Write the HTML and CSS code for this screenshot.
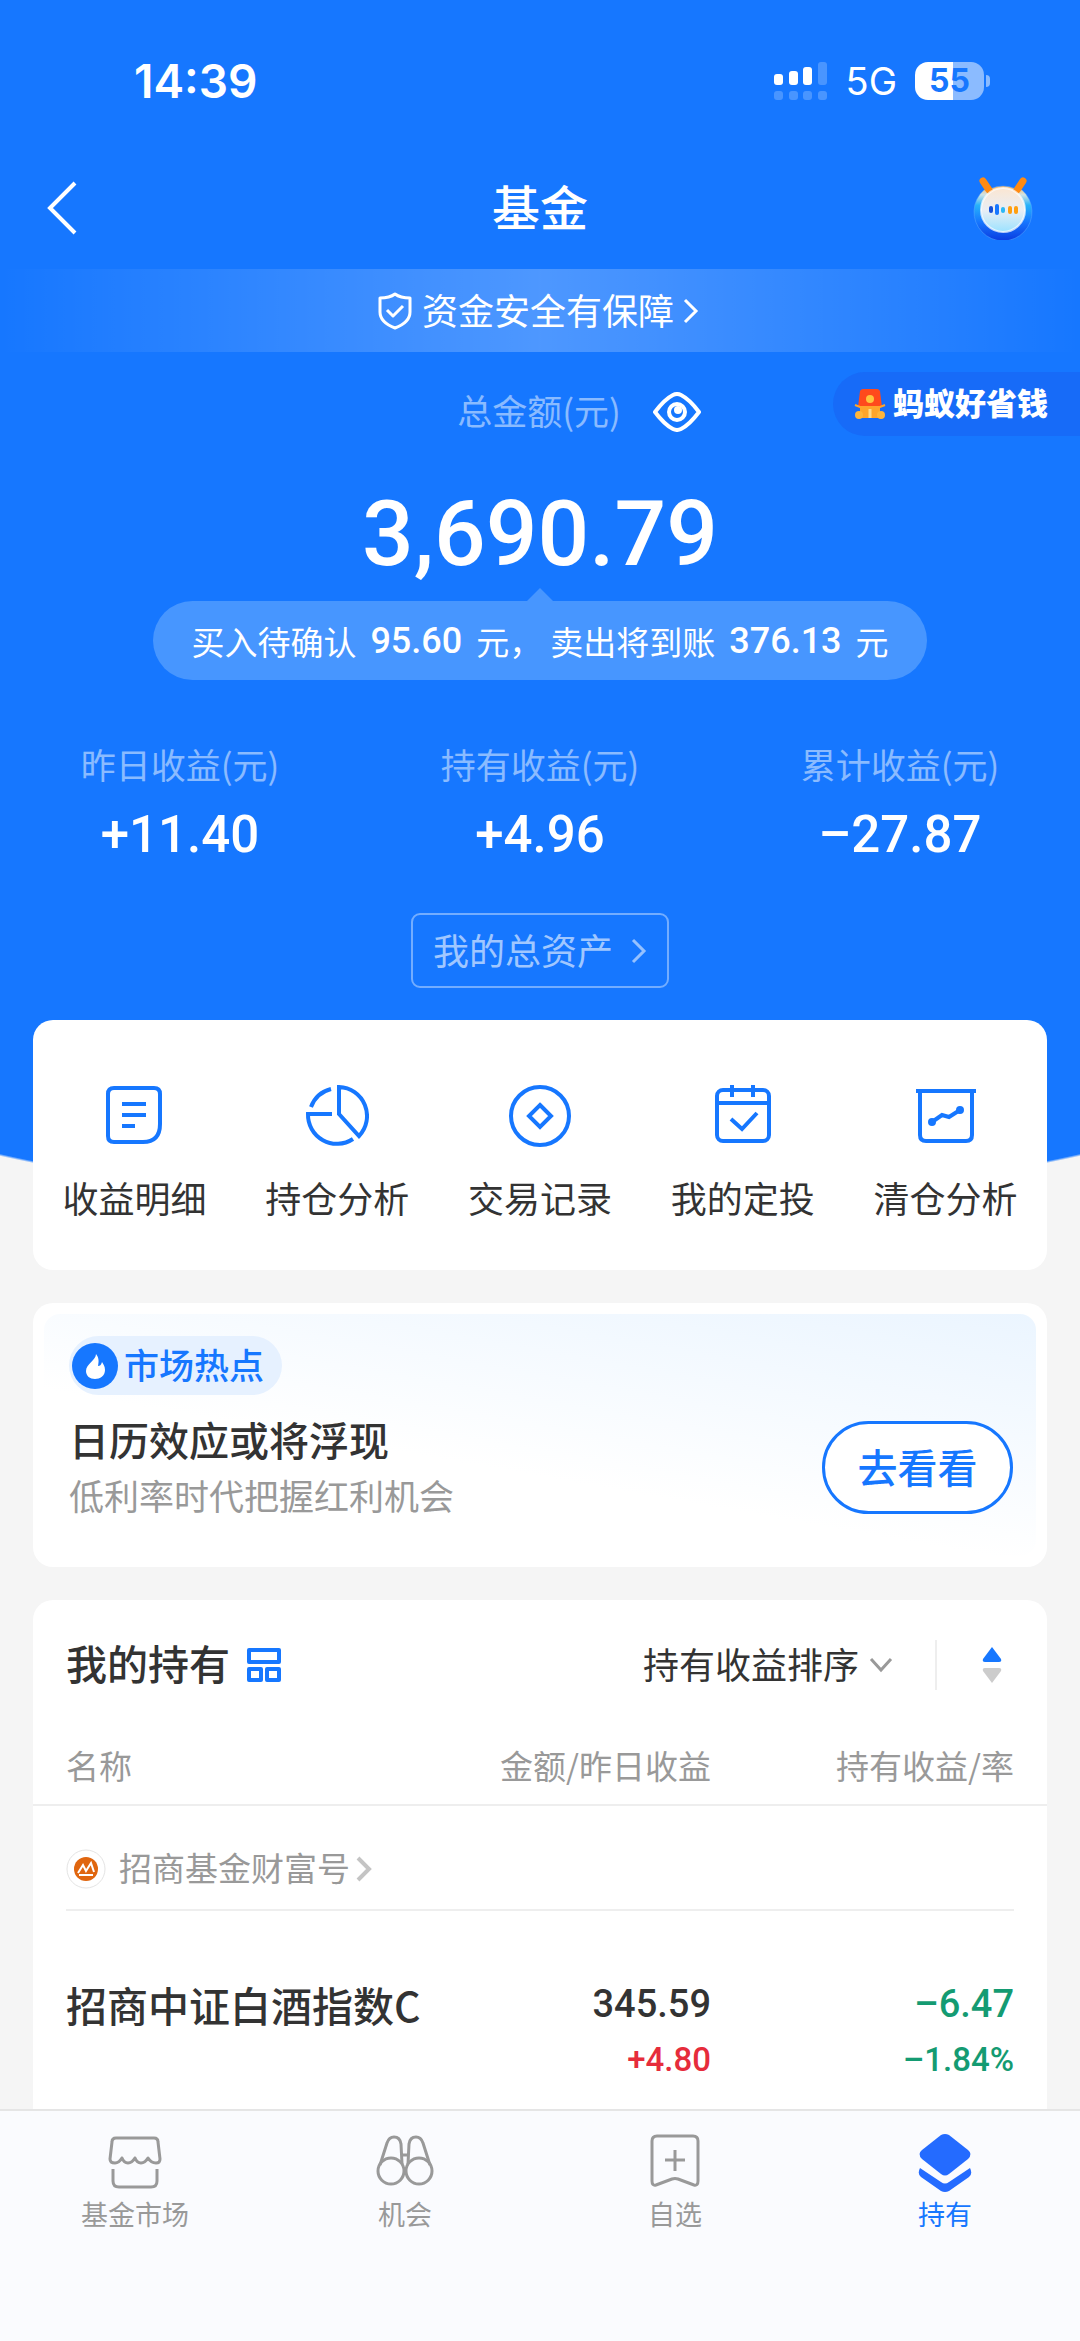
FILE: index.html
```html
<!DOCTYPE html>
<html lang="zh-CN">
<head>
<meta charset="utf-8">
<meta name="viewport" content="width=device-width, initial-scale=1">
<title>基金</title>
<link rel="stylesheet" href="styles.css">
</head>
<body>
<div class="page">
  <header class="hero">
    <div class="status">
      <span class="clock">14:39</span>
      <div class="status-right">
        <svg class="signal" width="54" height="38" viewBox="0 0 54 38" fill="#fff">
          <rect x="0" y="12" width="9" height="11" rx="3"/><rect x="15" y="9" width="9" height="14" rx="3"/><rect x="29" y="5" width="9" height="18" rx="3"/>
          <g opacity=".22"><rect x="44" y="0" width="9" height="23" rx="3"/><rect x="0" y="29" width="9" height="9" rx="3"/><rect x="15" y="29" width="9" height="9" rx="3"/><rect x="29" y="29" width="9" height="9" rx="3"/><rect x="44" y="29" width="9" height="9" rx="3"/></g>
        </svg>
        <span class="network">5G</span>
        <div class="battery"><span class="battery-level">55</span></div>
      </div>
    </div>

    <nav class="topbar">
      <button class="icon-button" aria-label="返回">
        <svg width="32" height="54" viewBox="0 0 32 54" fill="none" stroke="#fff" stroke-width="4"><path d="M29 2 4 27l25 25"/></svg>
      </button>
      <h1 class="title">基金</h1>
      <button class="icon-button" aria-label="智能助理">
        <svg width="62" height="64" viewBox="0 0 62 64">
          <defs>
            <linearGradient id="ring" x1="0" y1="0" x2="0" y2="1"><stop offset="0" stop-color="#ffb35a"/><stop offset=".16" stop-color="#cfe3e6"/><stop offset=".35" stop-color="#27b2fa"/><stop offset=".65" stop-color="#1677ff"/><stop offset="1" stop-color="#0a3be0"/></linearGradient>
            <linearGradient id="face" x1="0" y1="0" x2="0" y2="1"><stop offset="0" stop-color="#fbe6d2"/><stop offset=".5" stop-color="#e9eef4"/><stop offset="1" stop-color="#9be2ff"/></linearGradient>
          </defs>
          <path d="M12 14a29 29 0 1 0 38 0l-6-1q-13-6-26 0z" fill="url(#ring)" stroke="#5aa8ff" stroke-opacity=".5"/>
          <g fill="none" stroke="#ff8a12" stroke-width="7" stroke-linecap="round"><path d="M11 5l6 9"/><path d="M51 5l-6 9"/></g>
          <circle cx="31" cy="34" r="22" fill="url(#face)" stroke="#fff" stroke-opacity=".7" stroke-width="2"/>
          <g stroke-width="4" stroke-linecap="round"><path d="M19 32v3" stroke="#1550d8"/><path d="M25 30v7" stroke="#1677ff"/><path d="M31 33v2" stroke="#2bb8f5"/><path d="M38 32v4M44 32v4" stroke="#ff9f0f"/></g>
        </svg>
      </button>
    </nav>

    <a class="security" href="#">
      <svg width="36" height="38" viewBox="0 0 36 38" fill="none" stroke="#fff" stroke-width="3" stroke-linejoin="round"><path d="M18 2c4 3 9 4 15 4v14c0 8-7 13-15 16C10 33 3 28 3 20V6c6 0 11-1 15-4z"/><path d="M10 18l6 6 10-10"/></svg>
      <span>资金安全有保障</span>
      <svg width="16" height="26" viewBox="0 0 16 26" fill="none" stroke="#fff" stroke-width="3"><path d="M2 2l11 11L2 24"/></svg>
    </a>

    <section class="total">
      <div class="total-head">
        <span>总金额(元)</span>
        <button class="icon-button" aria-label="隐藏金额">
          <svg width="48" height="40" viewBox="0 0 48 40" fill="none" stroke="#fff"><path d="M2 20C8 12 14 6 20 3q4-2 8 0c6 3 12 9 18 17-6 8-12 14-18 17q-4 2-8 0C14 34 8 28 2 20z" stroke-width="4" stroke-linejoin="round"/><circle cx="24" cy="20" r="8" stroke-width="4"/><circle cx="25" cy="18" r="4" fill="#fff" stroke="none"/></svg>
        </button>
      </div>
      <a class="saving" href="#">
        <svg width="34" height="32" viewBox="0 0 34 32"><path d="M7 3q1-2 3-2h14q2 0 3 2l2 16H5z" fill="#ff4a1c"/><circle cx="17" cy="11" r="4" fill="#ffc53d"/><path d="M2 17l5 2h20l5-2" fill="none" stroke="#ffa52b" stroke-width="2"/><path d="M7 19h20v11H7z" fill="#ffa52b"/><circle cx="6" cy="27" r="4" fill="#ffb53c"/><circle cx="28" cy="27" r="4" fill="#ffb53c"/><path d="M17 21v9" stroke="#ffd98a" stroke-width="3"/></svg>
        <span>蚂蚁好省钱</span>
      </a>
      <p class="amount">3,690.79</p>
      <p class="pending"><span>买入待确认</span><b>95.60</b><span class="pending-buy">元，</span><span>卖出将到账</span><b>376.13</b><span>元</span></p>
    </section>

    <dl class="stats">
      <div><dt>昨日收益(元)</dt><dd>+11.40</dd></div>
      <div><dt>持有收益(元)</dt><dd>+4.96</dd></div>
      <div><dt>累计收益(元)</dt><dd>–27.87</dd></div>
    </dl>

    <button class="assets"><span>我的总资产</span>
      <svg width="16" height="26" viewBox="0 0 16 26" fill="none" stroke="#fff" stroke-opacity=".55" stroke-width="3"><path d="M2 2l11 11L2 24"/></svg>
    </button>
  </header>

  <main class="content">
    <nav class="card shortcuts">
      <a href="#"><svg class="glyph" viewBox="0 0 64 64"><path d="M12 4h40q6 0 6 6v30q0 18-17 18H12q-6 0-6-6V10q0-6 6-6z"/><path d="M20 20h24M20 31h24M20 42h13"/></svg><span>收益明细</span></a>
      <a href="#"><svg class="glyph" viewBox="0 0 64 64"><path d="M6 23A29 29 0 0 1 26 5"/><path d="M27 30H3a29 29 0 0 0 45 25"/><path d="M34 3v27l20 22A29 29 0 0 0 34 3z"/></svg><span>持仓分析</span></a>
      <a href="#"><svg class="glyph" viewBox="0 0 64 64"><circle cx="32" cy="32" r="29"/><path d="M32 21l11 11-11 11-11-11z"/></svg><span>交易记录</span></a>
      <a href="#"><svg class="glyph" viewBox="0 0 64 64"><rect x="6" y="6" width="52" height="51" rx="6"/><path d="M6 19h52M21 1v12M42 1v12M20 35l11 10 15-16"/></svg><span>我的定投</span></a>
      <a href="#"><svg class="glyph" viewBox="0 0 64 64"><path d="M2 7h60M6 8v43q0 6 6 6h40q6 0 6-6V8"/><path d="M18 38l10-7 7 2 11-7"/><circle cx="18" cy="38" r="2"/><circle cx="46" cy="26" r="2"/></svg><span>清仓分析</span></a>
    </nav>

    <section class="card hot">
      <div class="hot-inner">
        <div class="hot-text">
          <span class="tag"><svg width="46" height="46" viewBox="0 0 46 46"><circle cx="23" cy="23" r="23" fill="#1677ff"/><path d="M24 11c0 6-10 10-10 17 0 5 4 8 9 8s10-3 10-9c0-4-2-6-3-8-1 3-2 4-4 4 1-5 1-8-2-12z" fill="#fff"/></svg><span>市场热点</span></span>
          <h2>日历效应或将浮现</h2>
          <p>低利率时代把握红利机会</p>
        </div>
        <button class="go">去看看</button>
      </div>
    </section>

    <section class="card holdings">
      <div class="holdings-head">
        <h2>我的持有</h2>
        <button class="icon-button" aria-label="切换视图"><svg width="36" height="36" viewBox="0 0 36 36" fill="none" stroke="#1677ff" stroke-width="4" stroke-linejoin="round"><rect x="3" y="3" width="30" height="12"/><rect x="3" y="22" width="12" height="11"/><rect x="21" y="22" width="12" height="11"/></svg></button>
        <button class="sort"><span>持有收益排序</span><svg width="24" height="16" viewBox="0 0 24 16" fill="none" stroke="#999" stroke-width="3"><path d="M2 2l10 11L22 2"/></svg></button>
        <button class="order" aria-label="排序方向"><svg width="22" height="36" viewBox="0 0 22 36"><path d="M11 0l9 12q1 3-2 3H4q-3 0-2-3z" fill="#1677ff"/><path d="M11 36l9-12q1-3-2-3H4q-3 0-2 3z" fill="#ccc"/></svg></button>
      </div>
      <table class="funds">
        <thead><tr><th>名称</th><th>金额/昨日收益</th><th>持有收益/率</th></tr></thead>
        <tbody>
          <tr><td colspan="3"><a class="provider" href="#">
            <svg width="40" height="40" viewBox="0 0 40 40"><circle cx="20" cy="20" r="19" fill="#fff" stroke="#e4e4e4" stroke-width="1"/><circle cx="20" cy="20" r="12" fill="#e0660f"/><path d="M12 24l5-8 3 6 5-8 3 9M13 26h14" fill="none" stroke="#fff" stroke-width="2"/></svg>
            <span>招商基金财富号</span>
            <svg width="18" height="26" viewBox="0 0 18 26" fill="none" stroke="#c4c4c4" stroke-width="4"><path d="M3 2l11 11L3 24"/></svg>
          </a></td></tr>
          <tr class="fund">
            <td class="fund-name">招商中证白酒指数C</td>
            <td><span class="main-value">345.59</span><span class="sub-value up">+4.80</span></td>
            <td class="down"><span class="main-value">–6.47</span><span class="sub-value">–1.84%</span></td>
          </tr>
        </tbody>
      </table>
    </section>
  </main>

  <nav class="tabs">
    <a href="#"><svg viewBox="0 0 60 60"><path d="M11 6h38q4 0 4 4l2 17q0 4-4 4-5 0-8-5-3 5-7 5t-6-5q-3 5-7 5t-6-5q-3 5-7 5-5 0-5-4l2-17q0-4 4-4z"/><path d="M8 37v12q0 6 6 6h32q6 0 6-6V37"/></svg><span>基金市场</span></a>
    <a href="#"><svg viewBox="0 0 60 60"><circle cx="16" cy="39" r="13"/><circle cx="44" cy="39" r="13"/><path d="M5 33l7-22q2-6 7-6 6 0 7 7l1 20M55 33l-7-22q-2-6-7-6-6 0-7 7l-1 20M27 23h6"/></svg><span>机会</span></a>
    <a href="#"><svg viewBox="0 0 60 60"><path d="M12 4h36q5 0 5 5v40q0 5-4 4L33 47q-3-1-6 0L11 53q-4 1-4-4V9q0-5 5-5z"/><path d="M30 18v21M20 28h20"/></svg><span>自选</span></a>
    <a href="#" class="active" aria-current="page"><svg viewBox="0 0 60 60"><path d="M26 3q4-2 8 0l19 15q5 4 0 9L34 42q-4 3-8 0L7 27q-5-5 0-9z"/><path d="M5 36l21 14q4 3 8 0l21-14q3 6-1 9L34 59q-4 2-8 0L6 45q-4-3-1-9z"/></svg><span>持有</span></a>
  </nav>
</div>
</body>
</html>
```

FILE: styles.css
```css
* { box-sizing: border-box; margin: 0; padding: 0; }
body { font-family: "Noto Sans CJK SC", sans-serif; font-size: 36px; line-height: 48px; color: #333; background: #f5f5f5; }
button { font: inherit; color: inherit; background: none; border: 0; cursor: pointer; }
a { color: inherit; text-decoration: none; }
svg { display: block; flex: none; }
.page { min-height: 100vh; display: flex; flex-direction: column; }
.icon-button { display: flex; align-items: center; }

/* header */
.hero { display: flex; flex-direction: column; color: #fff; background: #1677ff; padding-bottom: 32px; }
.status { display: flex; justify-content: space-between; align-items: center; height: 162px; padding: 0 90px 0 134px; font-family: Inter, sans-serif; }
.clock { font-size: 46px; font-weight: 600; }
.status-right { display: flex; align-items: center; gap: 18px; }
.network { font-size: 38px; }
.battery { position: relative; width: 69px; height: 38px; border-radius: 13px; background: linear-gradient(90deg, #fff 55%, #8bbbff 55%); display: flex; align-items: center; justify-content: center; margin-right: 6px; }
.battery::after { content: ""; position: absolute; right: -6px; top: 13px; width: 4px; height: 12px; border-radius: 0 4px 4px 0; background: #8bbbff; }
.battery-level { font-size: 32px; font-weight: 700; color: #1677ff; }
.topbar { display: flex; justify-content: space-between; align-items: center; height: 92px; padding: 0 46px; }
.title { padding-bottom: 6px; font-size: 48px; font-weight: 500; }
.topbar .icon-button { flex: 1; }
.topbar .icon-button:last-child { justify-content: flex-end; }
.security { display: flex; align-items: center; justify-content: center; gap: 9px; height: 83px; margin-top: 15px; padding-right: 4px; background: linear-gradient(90deg, rgba(255,255,255,0), rgba(255,255,255,.24) 50%, rgba(255,255,255,0)); }
.security span, .assets span, .sort span, .tag span { padding-bottom: 4px; }
.total { position: relative; display: flex; flex-direction: column; align-items: center; padding-top: 32px; }
.total-head { display: flex; align-items: center; gap: 32px; height: 56px; padding-left: 78px; }
.total-head span { padding-bottom: 4px; color: rgba(255,255,255,.5); font-size: 35px; }
.saving { position: absolute; right: 0; top: 20px; display: flex; align-items: center; gap: 6px; height: 64px; padding: 0 32px 0 20px; border-radius: 32px 0 0 32px; background: #176bf8; font-size: 31px; font-weight: 900; }
.saving span { padding-bottom: 4px; }
.amount { margin-top: 42px; font: 500 91px/104px Roboto, sans-serif; }
.pending { position: relative; display: flex; align-items: center; height: 79px; margin-top: 15px; padding: 0 38px; border-radius: 40px; background: #4796ff; font-size: 33px; }
.pending::before { content: ""; position: absolute; left: 50%; bottom: 100%; margin-left: -13px; border: solid transparent; border-width: 0 13px 13px; border-bottom-color: #4796ff; }
.pending b { font: 500 36px/48px Roboto, sans-serif; margin: 0 14px; }
.pending-buy { margin-right: 8px; }
.stats { display: grid; grid-template-columns: repeat(3, 1fr); margin-top: 60px; text-align: center; }
.stats dt { color: rgba(255,255,255,.5); font-size: 35px; }
.stats dd { margin-top: 15px; font: 500 51px/64px Roboto, sans-serif; }
.assets { align-self: center; display: flex; align-items: center; gap: 18px; height: 75px; margin-top: 46px; padding: 0 20px; border: 2px solid rgba(255,255,255,.4); border-radius: 9px; color: rgba(255,255,255,.6); }

/* cards */
.content { flex: 1; display: flex; flex-direction: column; gap: 33px; padding: 0 33px; background: radial-gradient(ellipse 73% 187px at 50% 0, #1677ff 99%, transparent) no-repeat; }
.card { background: #fff; border-radius: 20px; }
.shortcuts { display: grid; grid-template-columns: repeat(5, 1fr); height: 250px; padding-top: 64px; }
.shortcuts a { display: flex; flex-direction: column; align-items: center; gap: 25px; }
.glyph { width: 64px; height: 64px; fill: none; stroke: #1677ff; stroke-width: 4; }
.hot { padding: 11px; height: 264px; }
.hot-inner { display: flex; justify-content: space-between; align-items: flex-start; height: 100%; padding: 22px 23px 0 25px; border-radius: 16px; background: linear-gradient(190deg, #ebf5ff, #fff 60%); }
.hot-text { display: flex; flex-direction: column; align-items: flex-start; }
.tag { display: flex; align-items: center; gap: 6px; height: 59px; padding: 0 18px 0 3px; border-radius: 30px; background: #e6f1ff; color: #1677ff; font-size: 35px; font-weight: 500; }
.hot h2 { margin-top: 20px; font-size: 40px; font-weight: 500; }
.hot p { margin-top: 8px; font-size: 35px; color: #999; }
.go { width: 191px; height: 93px; margin-top: 85px; padding-bottom: 4px; border: 3px solid #1677ff; border-radius: 47px; background: #fff; color: #1677ff; font-size: 40px; font-weight: 500; }
.holdings { flex: 1; border-radius: 20px 20px 0 0; }
.holdings-head { display: flex; align-items: center; height: 130px; padding: 0 44px 0 33px; }
.holdings h2 { padding-bottom: 6px; margin-right: 16px; font-size: 41px; font-weight: 500; }
.sort { display: flex; align-items: center; gap: 10px; margin-left: auto; }
.order { display: flex; align-items: center; height: 50px; margin-left: 42px; padding-left: 44px; border-left: 2px solid #eee; }
.funds { width: 100%; table-layout: fixed; border-collapse: collapse; }
.funds th, .funds td { text-align: right; vertical-align: top; }
.funds th { height: 75px; padding-top: 11px; font-size: 33px; font-weight: 400; color: #999; border-bottom: 2px solid #eee; }
.funds th:first-child { width: 421px; }
.funds th:nth-child(2) { width: 257px; }
.funds tr > :first-child { text-align: left; padding-left: 33px; }
.funds tr > :last-child { padding-right: 33px; }
.provider { display: flex; align-items: center; gap: 13px; height: 105px; padding-top: 22px; border-bottom: 2px solid #eee; font-size: 33px; color: #999; }
.provider span { padding-bottom: 4px; margin-right: -8px; }
.funds .fund td { padding-top: 65px; height: 196px; }
.fund-name { font-size: 41px; font-weight: 500; white-space: nowrap; line-height: 56px; }
.main-value, .sub-value { display: block; font-family: Roboto, sans-serif; font-weight: 500; line-height: 56px; }
.main-value { font-size: 38px; }
.sub-value { font-size: 33px; }
.up { color: #e62c3b; }
.down { color: #149b72; }

/* tab bar */
.tabs { position: sticky; bottom: 0; display: grid; grid-template-columns: repeat(4, 1fr); height: 232px; padding-top: 21px; background: #fafbfe; border-top: 2px solid #e5e5e5; font-size: 27px; line-height: 40px; color: #999; }
.tabs a { display: flex; flex-direction: column; align-items: center; gap: 2px; }
.tabs svg { width: 60px; height: 60px; fill: none; stroke: #999; stroke-width: 3; stroke-linejoin: round; }
.tabs .active { color: #1677ff; }
.tabs .active svg { fill: #246bff; stroke: none; }
```
